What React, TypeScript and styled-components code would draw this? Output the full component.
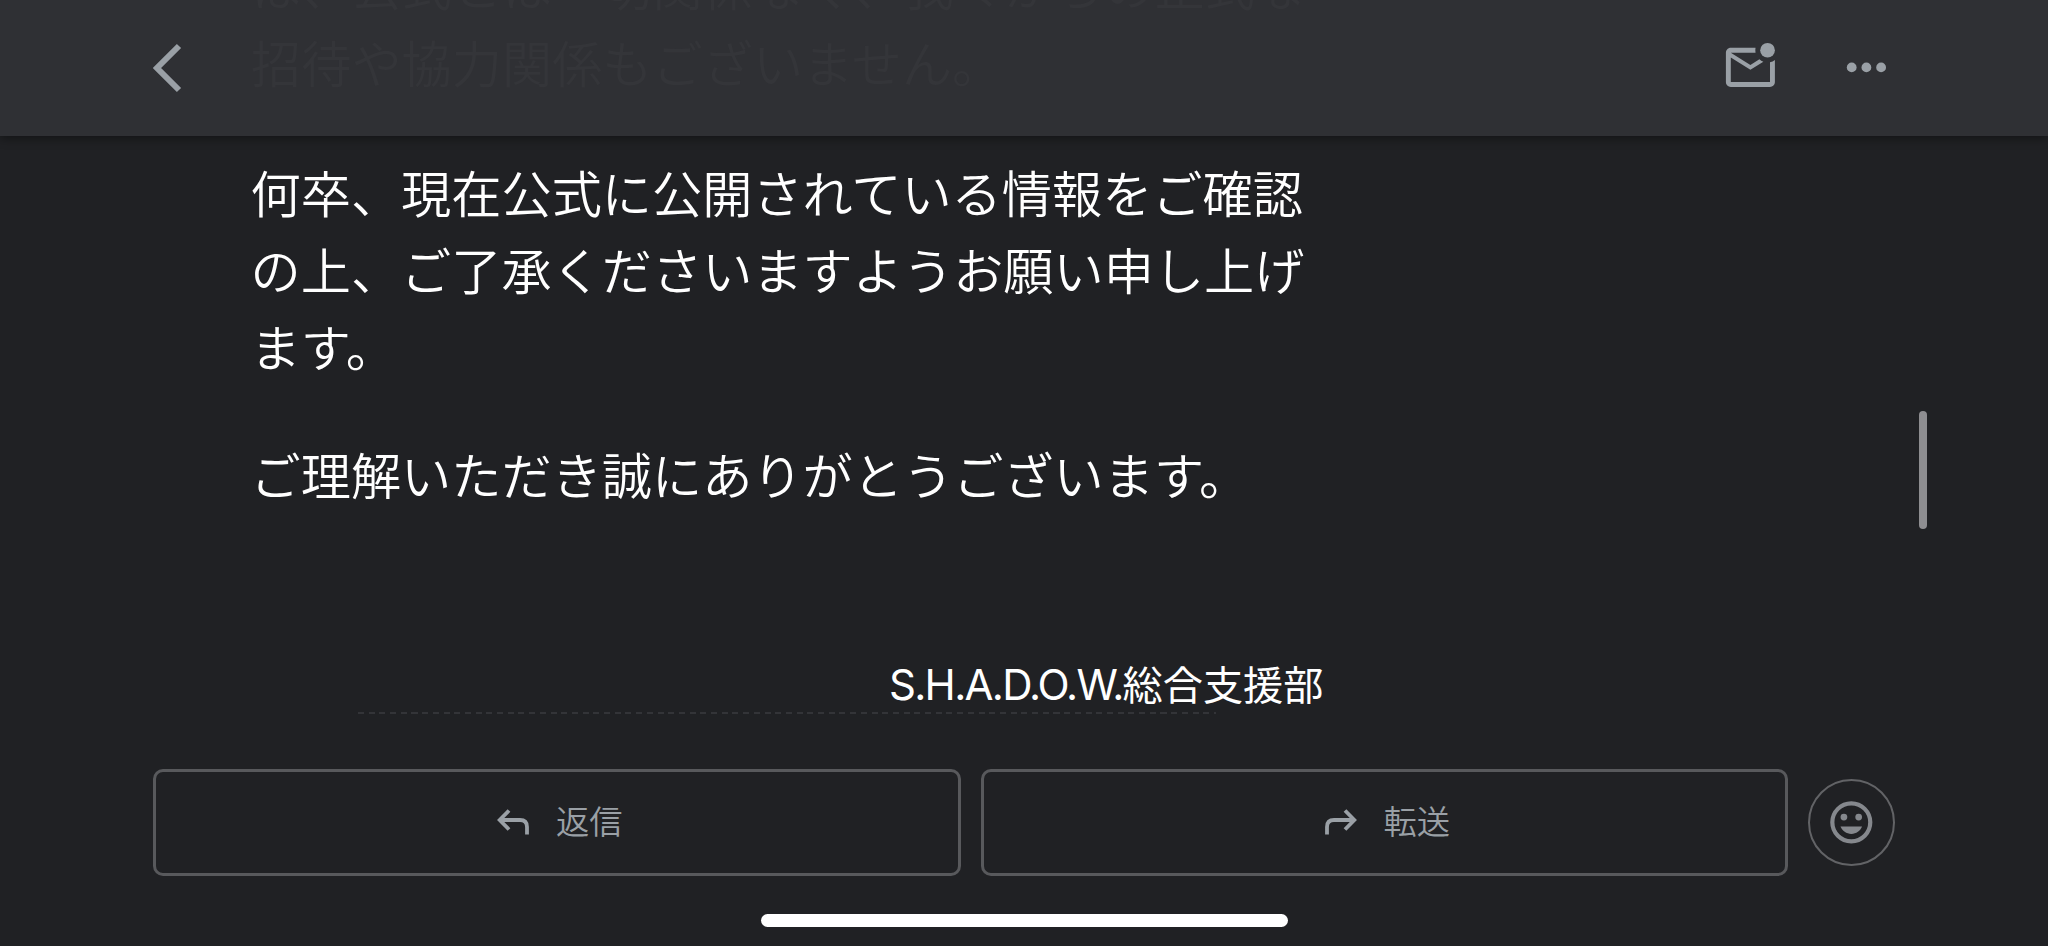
import React from 'react'
import styled, { createGlobalStyle } from 'styled-components'

const GlobalStyle = createGlobalStyle`
    * {
        box-sizing: border-box;
    }

    body {
        margin: 0;
        background: #202124;
        overflow: hidden;
    }
`

const Screen = styled.div`
    display: flex;
    flex-direction: column;
    width: 2048px;
    height: 946px;
    overflow: hidden;
    color: #fff;
    background: #202124;
    font-family: 'Noto Sans CJK JP', sans-serif;
    font-weight: 350;
`

const Header = styled.header`
    flex: none;
    display: flex;
    align-items: flex-start;
    height: 136px;
    padding: 0 152px 0 153px;
    color: #9aa0a6;
    background: #2f3034;
    box-shadow: 0 2px 10px rgba(0, 0, 0, 0.45);
`

const BackButton = styled.button`
    display: flex;
    margin: 43px 0 0;
    padding: 0;
    border: 0;
    color: inherit;
    background: none;
`

const Underlay = styled.div`
    flex: 1;
    height: 136px;
    margin-left: 68px;
    overflow: hidden;
    color: #343539;
`

const HeaderActions = styled.div`
    display: flex;
    gap: 57px;
    margin-top: 38px;
`

const Line = styled.p`
    height: 76.9px;
    margin: 0;
    font-size: 50.2px;
    line-height: 76.9px;
    white-space: nowrap;
`

const HiddenLines = styled.div`
    margin-top: -54.3px;
`

const Message = styled.main`
    flex: 1;
    display: flex;
    justify-content: space-between;
    padding: 17px 121px 0 250.5px;
`

const Paragraph = styled.div`
    margin: 0 0 51.6px;
`

const Signature = styled.div`
    display: flex;
    align-items: baseline;
    justify-content: flex-end;
    width: 1073px;
    height: 58px;
    margin-top: 142px;
    font-size: 40.2px;
    font-weight: 400;
    line-height: 58px;
    white-space: nowrap;
`

const Initials = styled.span`
    font-family: Inter, sans-serif;
    font-size: 42px;
    letter-spacing: -1.7px;
`

const DashedRule = styled.div`
    width: 858px;
    height: 2px;
    margin-left: 107px;
    background: repeating-linear-gradient(90deg, #333438 0 6px, transparent 6px 10.7px);
`

const ScrollThumb = styled.div`
    width: 8px;
    height: 118px;
    margin-top: 258px;
    border-radius: 4px;
    background: #8e8e91;
`

const Footer = styled.footer`
    flex: none;
    display: flex;
    align-items: center;
    gap: 20px;
    height: 107px;
    padding: 0 153px;
`

const ActionButton = styled.button`
    flex: 1;
    display: flex;
    align-items: center;
    height: 107px;
    padding: 0 0 2px 340px;
    gap: 26px;
    border: 3px solid #58595c;
    border-radius: 10px;
    color: #9aa0a6;
    background: none;
    font-family: inherit;
    font-size: 33.3px;
    font-weight: inherit;
    line-height: 50px;
`

const ActionLabel = styled.span`
    padding-bottom: 4px;
`

const EmojiButton = styled.button`
    flex: none;
    display: flex;
    align-items: center;
    justify-content: center;
    width: 87px;
    height: 87px;
    margin-bottom: 1px;
    padding: 0;
    border: 2px solid #626366;
    border-radius: 50%;
    color: #85888d;
    background: none;
`

const HomeArea = styled.div`
    flex: none;
    display: flex;
    justify-content: center;
    height: 70px;
    padding-top: 38px;
`

const HomeIndicator = styled.div`
    width: 527px;
    height: 13px;
    border-radius: 7px;
    background: #fff;
`

const BackIcon = () => (
    <svg width="30" height="50" viewBox="0 0 30 50" fill="none" stroke="currentColor" strokeWidth="6">
        <path d="M26 3L4 25L26 47" />
    </svg>
)

const UnreadIcon = () => (
    <svg width="58.8" height="58.8" viewBox="0 0 24 24" fill="currentColor">
        <path d="M22 8.98V18c0 1.1-.9 2-2 2H4c-1.1 0-2-.9-2-2V6c0-1.1.9-2 2-2h10.1a5 5 0 0 0 0 2H4l8 5 3.67-2.29c.47.43 1.02.76 1.63.98L12 13 4 8v10h16V9.9c.74-.15 1.42-.48 2-.92z" />
        <circle cx="19" cy="5" r="3" />
    </svg>
)

const MoreIcon = () => (
    <svg width="58.8" height="58.8" viewBox="0 0 24 24" fill="currentColor">
        <circle cx="6" cy="12" r="2" />
        <circle cx="12" cy="12" r="2" />
        <circle cx="18" cy="12" r="2" />
    </svg>
)

const ReplyIcon = ({ forward }: { forward?: boolean }) => (
    <svg width="34" height="28" viewBox="0 0 34 28" fill="none" stroke="currentColor" strokeWidth="3.8">
        <g transform={forward ? 'matrix(-1 0 0 1 34 0)' : undefined}>
            <path d="M13 2.5L3.7 12L13 21.5M3.7 12H24Q31 12 31 19V26.5" />
        </g>
    </svg>
)

const SmileIcon = () => (
    <svg width="50.6" height="50.6" viewBox="0 0 24 24" fill="currentColor">
        <circle cx="12" cy="12" r="9" fill="none" stroke="currentColor" strokeWidth="2" />
        <circle cx="8.5" cy="9.5" r="1.6" />
        <circle cx="15.5" cy="9.5" r="1.6" />
        <path d="M12 17.5c2.33 0 4.31-1.46 5.11-3.5H6.89c.8 2.04 2.78 3.5 5.11 3.5z" />
    </svg>
)

export default function App() {
    return (
        <>
            <GlobalStyle />
            <Screen>
                <Header>
                    <BackButton>
                        <BackIcon />
                    </BackButton>
                    <Underlay>
                        <HiddenLines>
                            <Line>は、公式とは一切関係なく、我々からの正式な</Line>
                            <Line>招待や協力関係もございません。</Line>
                        </HiddenLines>
                    </Underlay>
                    <HeaderActions>
                        <UnreadIcon />
                        <MoreIcon />
                    </HeaderActions>
                </Header>
                <Message>
                    <div>
                        <Paragraph>
                            <Line>何卒、現在公式に公開されている情報をご確認</Line>
                            <Line>の上、ご了承くださいますようお願い申し上げ</Line>
                            <Line>ます。</Line>
                        </Paragraph>
                        <Paragraph>
                            <Line>ご理解いただき誠にありがとうございます。</Line>
                        </Paragraph>
                        <Signature>
                            <Initials>S.H.A.D.O.W.</Initials>総合支援部
                        </Signature>
                        <DashedRule />
                    </div>
                    <ScrollThumb />
                </Message>
                <Footer>
                    <ActionButton>
                        <ReplyIcon />
                        <ActionLabel>返信</ActionLabel>
                    </ActionButton>
                    <ActionButton>
                        <ReplyIcon forward />
                        <ActionLabel>転送</ActionLabel>
                    </ActionButton>
                    <EmojiButton>
                        <SmileIcon />
                    </EmojiButton>
                </Footer>
                <HomeArea>
                    <HomeIndicator />
                </HomeArea>
            </Screen>
        </>
    )
}
